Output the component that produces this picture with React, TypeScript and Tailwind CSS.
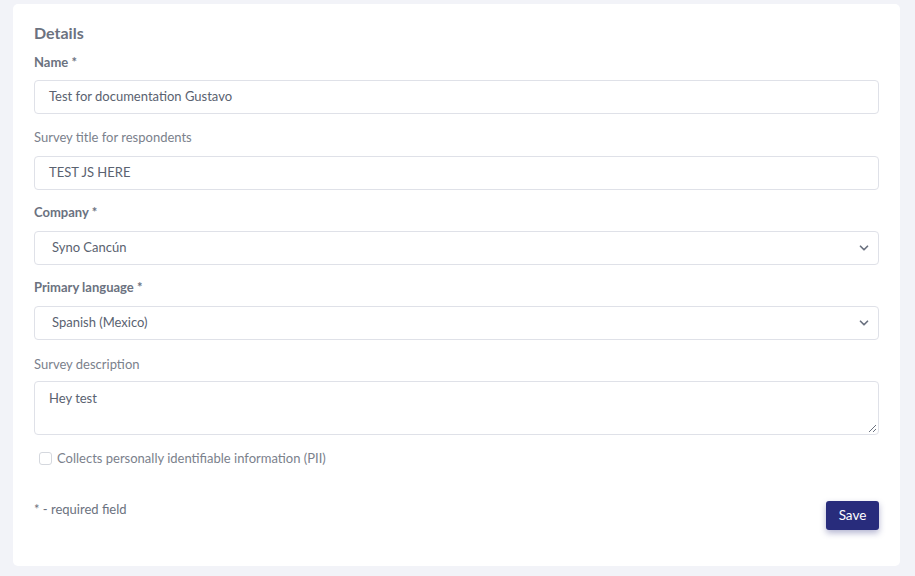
import { ChevronDown } from 'lucide-react'

const font = { fontFamily: 'Lato, "Open Sans", sans-serif' }

function Field({ value }: { value: string }) {
  return (
    <div className="h-[34px] border border-[#dfe1e8] rounded-[4px] px-[14px] flex items-center text-[13px] text-[#5a6270]">{value}</div>
  )
}

function Select({ value }: { value: string }) {
  return (
    <div className="h-[34px] border border-[#dfe1e8] rounded-[4px] pl-[17px] pr-[7px] flex items-center justify-between text-[13px] text-[#5a6270]">
      <span>{value}</span>
      <ChevronDown className="h-[14px] w-[14px] text-[#6b7280]" strokeWidth={3} />
    </div>
  )
}

export default function App() {
  return (
    <div className="w-[915px] h-[576px] bg-[#f2f3f8] pl-[13px] pr-[15px] pt-[4px]" style={font}>
      <div className="bg-white rounded-[5px] h-[562px] px-[21px] pt-[19px]">
        <h2 className="text-[16px] font-bold text-[#6b7280] leading-[19px]">Details</h2>
        <label className="block mt-[12px] text-[13px] font-bold text-[#6b7280] leading-[16px]">Name *</label>
        <div className="mt-[10px]"><Field value="Test for documentation Gustavo" /></div>
        <label className="block mt-[15px] text-[13px] text-[#7b818c] leading-[16px]">Survey title for respondents</label>
        <div className="mt-[11px]"><Field value="TEST JS HERE" /></div>
        <label className="block mt-[14px] text-[13px] font-bold text-[#6b7280] leading-[16px]">Company *</label>
        <div className="mt-[11px]"><Select value="Syno Cancún" /></div>
        <label className="block mt-[14px] text-[13px] font-bold text-[#6b7280] leading-[16px]">Primary language *</label>
        <div className="mt-[11px]"><Select value="Spanish (Mexico)" /></div>
        <label className="block mt-[16px] text-[13px] text-[#7b818c] leading-[16px]">Survey description</label>
        <div className="mt-[9px] relative h-[54px] border border-[#dfe1e8] rounded-[4px] px-[14px] pt-[7px] text-[13px] text-[#5a6270]">
          Hey test
          <svg className="absolute right-[1px] bottom-[1px]" width="9" height="9" viewBox="0 0 9 9">
            <path d="M8 1L1 8M8 5L5 8" stroke="#6b7280" strokeWidth="1" />
          </svg>
        </div>
        <div className="mt-[14px] flex items-center gap-[5px] pl-[5px]">
          <span className="w-[13px] h-[13px] border border-[#d5d8de] rounded-[3px] bg-white" />
          <span className="text-[13px] text-[#7b818c]">Collects personally identifiable information (PII)</span>
        </div>
        <div className="mt-[30px] flex justify-between items-start">
          <span className="text-[13px] text-[#6b7280] mt-[1px]">* - required field</span>
          <button className="mt-[2px] w-[53px] h-[29px] bg-[#282c7c] text-white text-[13.5px] rounded-[3px] shadow-[0_3px_6px_rgba(40,44,124,0.35)]">Save</button>
        </div>
      </div>
    </div>
  )
}
